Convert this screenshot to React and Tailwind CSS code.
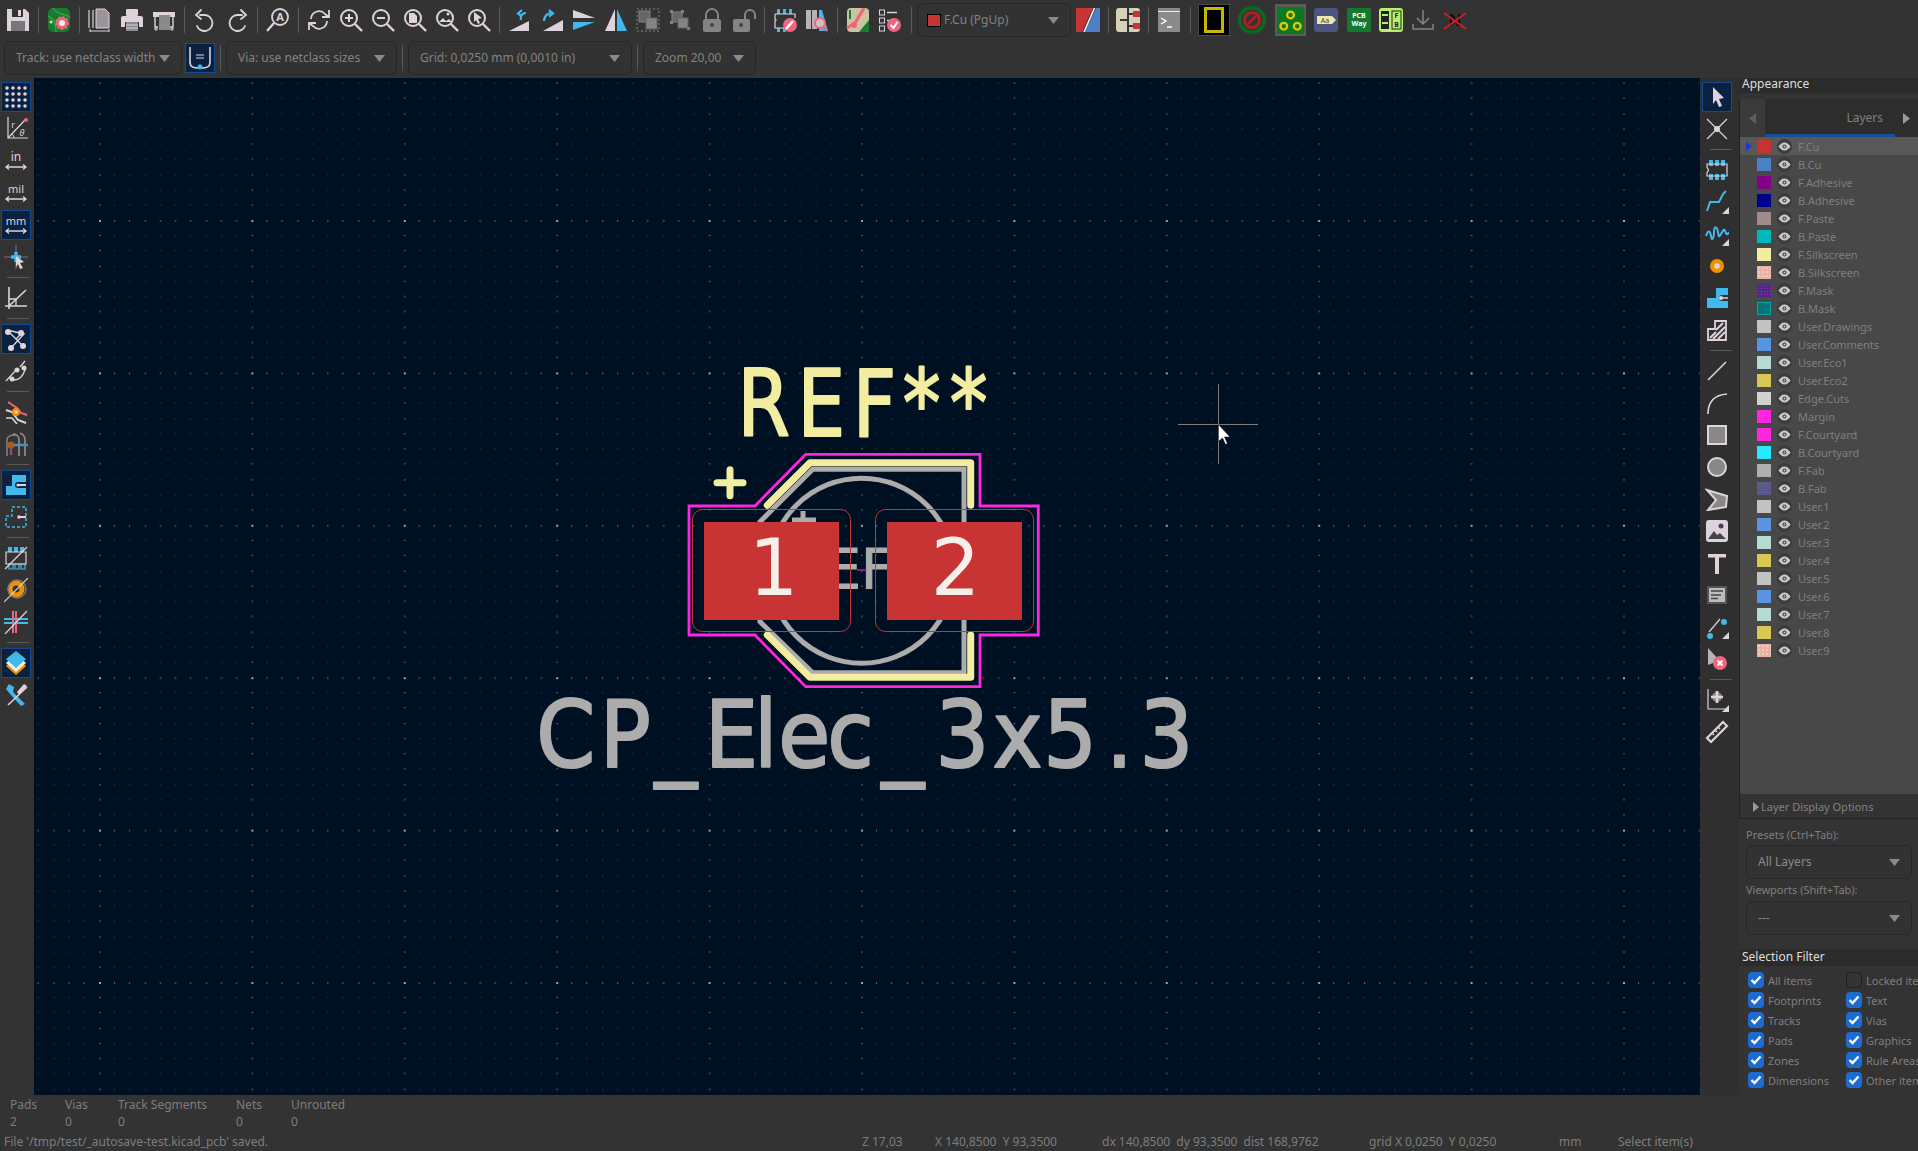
import React from 'react';

const L = '#ded3dd', B = '#42b8eb', P = '#f2647e', O = '#f29100', G = '#848484', D = '#333333';
const S = ({ children, s = 24 }) => (
  <svg viewBox="0 0 24 24" width={s} height={s} fill="none" stroke="none">{children}</svg>
);
const T = (p) => <text fontFamily="'Noto Sans',sans-serif" textAnchor="middle" {...p} />;

const Mag = ({ children }) => (
  <S>
    <circle cx="10" cy="10" r="8" stroke={L} strokeWidth="2" />
    <path d="M16 16l7 7" stroke={L} strokeWidth="2.4" />
    {children}
  </S>
);
const ic = {
  save: <S><path d="M1 1h18l4 4v18H1z" fill={L} /><rect x="6" y="1" width="11" height="8" fill={D} /><rect x="12" y="2" width="3" height="6" fill={L} /><rect x="5" y="13" width="14" height="10" fill="#777" /></S>,
  pcb: <S><rect x="1" y="0" width="22" height="24" rx="5" fill="#1a7a30" /><path d="M6 0c4 8 12 4 17 10M1 8c6 2 8 8 8 16" stroke="#35a04a" strokeWidth="1.5" /><circle cx="15" cy="15" r="6" fill={P} stroke={P} strokeWidth="2" strokeDasharray="2 2" /><circle cx="15" cy="15" r="3" fill="#f4eeee" /><circle cx="4" cy="14" r="1.5" fill="#e8e090" /></S>,
  page: <S><path d="M5 2v18M1 2v18" stroke={L} strokeWidth="1.2" /><path d="M8 1h9l4 4v15H8z" fill="#9a9499" stroke={L} strokeWidth="1" /><path d="M2 23h19M2 21v4M21 21v4" stroke={L} strokeWidth="1" /></S>,
  print: <S><rect x="6" y="1" width="12" height="7" rx="1" fill={L} /><path d="M3 8h18a2 2 0 012 2v9h-4v-5H5v5H1v-9a2 2 0 012-2z" fill={L} /><rect x="6" y="14" width="12" height="9" fill="#8a8a8a" /><path d="M6 17h12M6 20h12" stroke={L} strokeWidth="1" /></S>,
  plot: <S><path d="M1 4h22v5H1z" fill={L} /><path d="M3 9v10h3M21 9v10h-3" stroke={L} strokeWidth="1.4" /><rect x="7" y="7" width="11" height="15" fill="#8a8a8a" /><path d="M2 21h4M18 21h4M4 19v4M20 19v4" stroke={L} strokeWidth="1" /></S>,
  undo: <S><path d="M7 7h5a8 8 0 11-8 11" stroke={L} strokeWidth="1.8" strokeLinecap="round" /><path d="M8 2L3 7l5 4" stroke={L} strokeWidth="1.8" strokeLinecap="round" /></S>,
  redo: <S><path d="M17 7h-5a8 8 0 108 11" stroke={L} strokeWidth="1.8" strokeLinecap="round" /><path d="M16 2l5 5-5 4" stroke={L} strokeWidth="1.8" strokeLinecap="round" /></S>,
  find: <S><circle cx="14" cy="9" r="8" stroke={L} strokeWidth="1.8" /><path d="M8 15l-7 8" stroke={L} strokeWidth="2.2" /><T x="14" y="13" fontSize="11" fontWeight="700" fill={L}>A</T></S>,
  refresh: <S><path d="M4 11a8 8 0 0114-5l4 3M20 13a8 8 0 01-14 5l-4-3" stroke={L} strokeWidth="1.8" /><path d="M22 2v7h-7M2 22v-7h7" stroke={L} strokeWidth="1.8" /></S>,
  zin: <Mag><path d="M10 6v8M6 10h8" stroke={L} strokeWidth="2" /></Mag>,
  zout: <Mag><path d="M6 10h8" stroke={L} strokeWidth="2" /></Mag>,
  zfit: <Mag><path d="M6 5h5l3 3v7H6z" fill={L} /></Mag>,
  zobj: <Mag><path d="M4 14l4-4 3 3 3-2 3 3z" fill={L} /><circle cx="13" cy="6" r="1.5" fill={L} /></Mag>,
  zsel: <Mag><path d="M7 4l8 6-4 1 2 4-2 1-2-4-2 2z" fill={L} /></Mag>,
  rotL: <S><path d="M1 23l20-10v10z" fill={L} /><path d="M13 12c-1-4 1-7 5-7M14 2l-4 3.500 4 3" stroke={B} strokeWidth="2.200" /></S>,
  rotR: <S><path d="M23 23H3l20-11z" fill={L} /><path d="M4 13c0-4 3-8 7-8M9 2l4 3.500-4 3" stroke={B} strokeWidth="2.200" /></S>,
  flipV: <S><path d="M1 2l22 8H1z" fill={L} /><path d="M1 22l22-8H1z" fill={B} /></S>,
  flipH: <S><path d="M11 1L1 23h10z" fill={L} /><path d="M13 1l10 22H13z" fill={B} /></S>,
  group: <S><rect x="1" y="1" width="22" height="22" stroke={G} strokeDasharray="2 2" /><rect x="3" y="3" width="11" height="11" fill="#666" stroke={G} /><rect x="10" y="10" width="11" height="11" fill={G} stroke="#666" /></S>,
  ungroup: <S><path d="M2 2h3v3H2zM13 2h3v3h-3zM2 13h3v3H2zM19 19h3v3h-3z" fill={G} /><rect x="4" y="4" width="10" height="10" fill="#666" stroke={G} /><rect x="10" y="10" width="10" height="10" fill={G} stroke="#666" /></S>,
  lock: <S><path d="M6 11V7a6 6 0 0112 0v4" stroke={G} strokeWidth="2" /><rect x="3" y="11" width="18" height="13" rx="2" fill={G} /><circle cx="12" cy="17" r="2" fill="#444" /></S>,
  unlock: <S><path d="M13 11V7a5 5 0 0110 0v4" stroke={G} strokeWidth="2" /><rect x="1" y="11" width="17" height="13" rx="2" fill={G} /><circle cx="9" cy="17" r="2" fill="#444" /></S>,
  fpBrowse: <S><path d="M4 1h3v5H4zM10 1h3v5h-3zM16 1h3v5h-3z" fill={B} /><path d="M4 20h3v4H4zM10 20h3v4h-3z" fill={B} /><path d="M2 6h20v4M2 6v5l1 1-1 1v7h10" stroke={L} strokeWidth="1.200" /><circle cx="17" cy="17" r="7" fill={P} /><path d="M13 21l7-8" stroke="#fff" strokeWidth="2.500" /></S>,
  lib: <S><rect x="1" y="2" width="5" height="19" fill="#b9b1b8" /><rect x="7" y="2" width="5" height="19" fill="#b9b1b8" /><path d="M14 2h3l6 21h-9z" fill={B} /><circle cx="15" cy="15" r="5" stroke={P} strokeWidth="2" fill="#c9c1c8" /><path d="M18 18l4 5" stroke={P} strokeWidth="2.500" /></S>,
  brd: <S><rect x="1" y="0" width="22" height="24" rx="4" fill="#c9c3a0" /><path d="M13 24L23 12v12z" fill="#1a7a30" /><path d="M1 20c5-4 9-4 11-10l6-10" stroke={P} strokeWidth="3" /><circle cx="8" cy="17" r="3" fill={P} /><path d="M4 2v9" stroke="#1a7a30" strokeWidth="2" /></S>,
  drc: <S><rect x="1.500" y="2" width="5" height="5" stroke={L} /><path d="M9 4.500h10" stroke={L} strokeWidth="1.500" /><rect x="1.500" y="10" width="5" height="5" stroke={L} /><path d="M9 12.500h3" stroke={L} strokeWidth="1.500" /><rect x="1.500" y="18" width="5" height="5" stroke={L} /><circle cx="16" cy="17" r="7" fill={P} /><path d="M12.500 17l3 3 4-6" stroke="#fff" strokeWidth="2" /></S>,
  pair: <S><path d="M0 0h17L6 24H0z" fill="#c83434" /><path d="M24 0v24H9L20 0z" fill="#4d7fc4" /><path d="M18.500 0L8 24" stroke="#fff" strokeWidth="1.500" /></S>,
  net: <S><rect x="0" y="0" width="24" height="24" rx="3" fill="#d8cfb8" /><path d="M12 0v24M12 6h8M12 18h8M4 12h8" stroke="#333" strokeWidth="2" /><path d="M17 3h7v6h-7zM17 15h7v6h-7z" fill="#c83434" /></S>,
  con: <S><rect x="1" y="0" width="22" height="24" fill="#8a8a8a" /><path d="M1 3.500h22" stroke="#eee" strokeWidth="1" /><path d="M4 10l5 3-5 3M10 19h5" stroke="#fff" strokeWidth="1.300" /></S>,
  hide: <div className="w-[32px] h-[32px] bg-black border border-[#4a4a4a] flex items-center justify-center"><div className="w-[20px] h-[26px] border-[3px] border-[#c8b800]" /></div>,
  noHole: <S s={28}><circle cx="12" cy="12" r="10.500" stroke="#0a6a1f" strokeWidth="3" /><circle cx="12" cy="12" r="6.500" stroke="#b02020" strokeWidth="2.500" /><path d="M8 16l8-8" stroke="#b02020" strokeWidth="2" /></S>,
  rings: <S s={27}><rect x="0" y="0" width="24" height="24" fill="#0a7a1f" /><circle cx="12" cy="7" r="3" stroke="#e8c800" strokeWidth="2" /><circle cx="6" cy="17" r="3" stroke="#e8c800" strokeWidth="2" /><circle cx="18" cy="17" r="3" stroke="#e8c800" strokeWidth="2" /></S>,
  tag: <S><rect x="0" y="0" width="24" height="24" rx="3" fill="#4c5480" /><path d="M3 8h15l4 4-4 4H3z" fill="#efe8a8" /><T x="11" y="15" fontSize="7" fill="#444">Aa</T></S>,
  way: <S><rect x="0" y="0" width="24" height="24" rx="2" fill="#16782f" /><T x="12" y="10" fontSize="7" fontWeight="700" fill="#fff">PCB</T><T x="12" y="18" fontSize="7" fontWeight="700" fill="#fff">Way</T></S>,
  fb: <S><rect x="0" y="0" width="24" height="24" rx="3" fill="#b8f070" /><rect x="2" y="3" width="8" height="18" fill="#222" /><rect x="13" y="3" width="9" height="18" fill="#b8f070" stroke="#222" /><T x="17.500" y="10" fontSize="7" fontWeight="700" fill="#222">F</T><T x="17.500" y="19" fontSize="7" fontWeight="700" fill="#222">B</T><path d="M3 7h6M3 15h6" stroke="#b8f070" strokeWidth="2" /></S>,
  down: <S><path d="M12 2v14M6 10l6 6 6-6" stroke={G} strokeWidth="1.500" /><path d="M2 16v5h20v-5" stroke={G} strokeWidth="1.500" /></S>,
  noNet: <S><T x="12" y="18" fontSize="16" fontWeight="700" fill="#111">N</T><path d="M1 21L23 5M1 5l22 16" stroke="#d02020" strokeWidth="1.800" /></S>,
  trk: <S><path d="M2 1v15c0 5 3 6 10 6s10-1 10-6V1" stroke={L} strokeWidth="1.600" /><path d="M8 9h8M8 12h8" stroke={L} /><circle cx="12" cy="21" r="2.500" fill={B} /></S>,
  dots: <S>{[3, 9, 15, 21].flatMap((y) => [3, 9, 15, 21].map((x) => <circle key={x + '-' + y} cx={x} cy={y} r="1.800" fill={L} />))}</S>,
  polar: <S><path d="M4 0v21h21" stroke={L} strokeWidth="1.200" /><path d="M4 21L21 3" stroke={L} strokeWidth="1.200" /><circle cx="22" cy="3" r="2" fill={P} /><T x="9" y="11" fontSize="9" fill={L}>r</T><T x="18" y="19" fontSize="9" fill={L} fontStyle="italic">θ</T><path d="M10 21a5 5 0 00-2-4" stroke={L} /></S>,
  inch: <S><T x="12" y="12" fontSize="12" fill={L}>in</T><path d="M2 18h20M5 15.500L2 18l3 2.500M19 15.500l3 2.500-3 2.500" stroke={L} strokeWidth="1.300" /></S>,
  mil: <S><T x="12" y="12" fontSize="11" fill={L}>mil</T><path d="M2 18h20M5 15.500L2 18l3 2.500M19 15.500l3 2.500-3 2.500" stroke={L} strokeWidth="1.300" /></S>,
  mm: <S><T x="12" y="12" fontSize="11" fill={L}>mm</T><path d="M2 18h20M5 15.500L2 18l3 2.500M19 15.500l3 2.500-3 2.500" stroke={L} strokeWidth="1.300" /></S>,
  cur: <S><path d="M12 0v24M0 12h24" stroke="#888" strokeWidth="0.800" /><path d="M12 7v10M7 12h10" stroke={B} strokeWidth="3.500" /><path d="M12 11l8 6-4 1 3 5-3 1-2-5-2 3z" fill={L} /></S>,
  angle: <S><path d="M5 1v22M1 20h22M5 20L22 4" stroke={L} strokeWidth="1.600" /><path d="M5 13h7v7" stroke={L} strokeWidth="1.300" /></S>,
  rats: <S><path d="M3 3l17 4-14 15M6 6l14 14M18 6l-6 6" stroke={L} strokeWidth="1.400" /><circle cx="4" cy="5" r="3" fill={L} /><circle cx="17" cy="6" r="3" fill={L} /><circle cx="7" cy="21" r="3" fill={L} /><circle cx="19" cy="19" r="3" fill={L} /></S>,
  rats2: <S><path d="M2 22L13 10" stroke={L} strokeWidth="1.300" /><path d="M16 8l5-6" stroke={L} strokeWidth="1.300" /><path d="M10 21c6 0 9-4 11-10" stroke={L} strokeWidth="1.300" /><circle cx="8" cy="20" r="2.500" fill={L} /><circle cx="20" cy="9" r="2.500" fill={L} /><circle cx="13" cy="11" r="2.500" fill={L} /></S>,
  high: <S><path d="M2 10l6 2 6 8 8 3" stroke={L} strokeWidth="2" /><path d="M4 2l9 6 4 5 6 2" stroke={P} strokeWidth="2" /><path d="M2 18l6 0 5 6" stroke={L} strokeWidth="1.600" /><circle cx="12" cy="12" r="4" fill={O} /><circle cx="12" cy="12" r="1.700" fill={L} /></S>,
  fill: <S><path d="M3 24V8c0-4 3-5 9-5" stroke="#888" strokeWidth="1.400" /><path d="M15 24V8c0-4-3-6-6-6M21 24V8c0-3-2-6-5-7" stroke="#888" strokeWidth="1.800" /><path d="M6 13h18" stroke="#4a93b0" strokeWidth="2.500" /><circle cx="7" cy="13" r="3.500" fill="#b05a20" /><path d="M7 15v8" stroke="#8a4a80" strokeWidth="2.500" /></S>,
  pad: <S><path d="M2 13h6V2h14v20H2z" fill={B} /><path d="M22 9h-8a3 3 0 000 6h8z" fill="#0a2240" /><circle cx="14" cy="12" r="1.600" fill={L} /><path d="M15 12h7" stroke={L} strokeWidth="2" /></S>,
  pad2: <S><path d="M2 11h6V2h14v20H2z" stroke={B} strokeDasharray="3 2" strokeWidth="1.500" /><circle cx="15" cy="12" r="1.800" fill={L} /><path d="M15 12h7" stroke={L} strokeWidth="2" /></S>,
  fpOff: <S><path d="M4 1h4v5H4zM10 1h4v5h-4zM16 1h4v5h-4z" fill={B} /><path d="M5 18h4v5H5zM11 18h4v5h-4zM17 18h4v5h-4z" stroke={B} strokeWidth="1.200" /><path d="M2 6h20v12H2z" stroke={L} strokeWidth="1.200" /><path d="M1 23L23 1" stroke={L} strokeWidth="1.200" /></S>,
  holeOff: <S><circle cx="12" cy="11" r="6" stroke={O} strokeWidth="5" /><circle cx="13" cy="11" r="9" stroke="#777" strokeWidth="1.400" /><path d="M0 24L24 0" stroke={L} strokeWidth="1.200" /></S>,
  padsOff: <S><path d="M0 13h24M0 9h24" stroke={B} strokeWidth="2" /><path d="M12 1v22M9 1v22" stroke={P} strokeWidth="2" /><path d="M1 24L23 1" stroke={L} strokeWidth="1.200" /></S>,
  layers: <S><path d="M12 6l10 9-10 9-10-9z" fill={O} /><path d="M12 3l10 9-10 9-10-9z" fill="#f2eee0" /><path d="M12 0l10 8-10 9L2 8z" fill={B} /></S>,
  tools: <S><path d="M2 6l5 6 10 11 4-2-12-12 1-5-5-3z" fill={B} /><path d="M23 4L4 22" stroke={L} strokeWidth="1.500" /><path d="M23 3l-3-2-7 8 2 3z" fill={L} /></S>,
  arrow: <S><path d="M8 2l11 11-5 1 3 7-3 1-3-7-3 4z" fill={L} /></S>,
  cross: <S><path d="M2 2l20 20M22 2L2 22" stroke={L} strokeWidth="1.200" /><circle cx="12" cy="12" r="3" fill={L} /></S>,
  fp: <S><path d="M4 2h4v6H4zM10 2h4v6h-4zM16 2h4v6h-4zM4 16h4v6H4zM10 16h4v6h-4zM16 16h4v6h-4z" fill={B} /><path d="M2 6h20v12H2v-3l1.500-3L2 9z" stroke={L} strokeWidth="1.200" /></S>,
  route: <S><path d="M2 21l3-9h9l4-8 3-3" stroke={B} strokeWidth="2" /><path d="M24 17v7h-7z" fill={L} /></S>,
  tune: <S><path d="M1 14c2-6 4-6 5 0s3 2 3-4 3-6 4 0 1 5 3 2 3-6 4-3 2 5 4 1" stroke={B} strokeWidth="2" /><path d="M24 17v7h-7z" fill={L} /></S>,
  via: <S><circle cx="12" cy="12" r="7" fill={O} /><circle cx="12" cy="12" r="2.800" fill={L} /></S>,
  padB: <S><path d="M2 12h9V2h12v20H2z" fill={B} /><path d="M23 9h-6a3 3 0 000 6h6z" fill={D} /><circle cx="16" cy="12" r="2" fill={L} /><path d="M16 12h7" stroke={L} strokeWidth="1.500" /></S>,
  zone: <S><path d="M3 22V11h7V3h11v19z" fill="#333" stroke={L} strokeWidth="1.800" /><path d="M5 20l6-6M8 21l12-12M13 21l7-7M11 12l7-7" stroke={L} strokeWidth="2" /></S>,
  line: <S><path d="M3 21L21 3" stroke={L} strokeWidth="1.600" /></S>,
  arc: <S><path d="M3 23C3 11 9 4 22 3" stroke={L} strokeWidth="1.600" /></S>,
  rect: <S><rect x="3" y="3" width="18" height="18" fill="#888" stroke={L} strokeWidth="2" /></S>,
  circ: <S><circle cx="12" cy="12" r="9" fill="#888" stroke={L} strokeWidth="2" /></S>,
  poly: <S><path d="M2 3l20 6-1 11-18 3 8-10z" fill="#888" stroke={L} strokeWidth="2" /></S>,
  img: <S><rect x="1" y="1" width="22" height="22" rx="3" fill={L} /><path d="M3 20l6-8 3 4 3-2 6 6z" fill="#444" /><circle cx="16" cy="7" r="2.500" fill="#444" /></S>,
  txt: <S><path d="M3 3h18v3.500h-7V23h-4V6.500H3z" fill={L} /></S>,
  box: <S><rect x="2" y="3" width="20" height="18" fill="#555" /><rect x="4" y="5" width="16" height="14" fill="#bbb" /><path d="M6 8h12M6 12h10M6 15.500h7" stroke="#444" strokeWidth="1.300" /></S>,
  dim: <S><path d="M4 17L15 4" stroke={L} strokeWidth="1.200" /><circle cx="19" cy="7" r="3" fill={B} /><circle cx="5" cy="21" r="3" fill={B} /><path d="M24 17v7h-7z" fill={L} /></S>,
  del: <S><path d="M3 1l12 13-7 2-5 2z" fill="#b9b1b8" /><circle cx="15" cy="16" r="7" fill={P} /><path d="M12.500 13.500l5 5M17.500 13.500l-5 5" stroke="#fff" strokeWidth="2" /></S>,
  origin: <S><path d="M3 1v20h18" stroke={L} strokeWidth="1.200" /><circle cx="12" cy="9" r="5" fill="#888" /><path d="M12 3v12M6 9h12" stroke={L} strokeWidth="2.500" /><path d="M24 17v7h-7z" fill={L} /></S>,
  ruler: <S><path d="M2 18L18 2l4 4L6 22z" stroke={L} strokeWidth="2.200" /><path d="M7 13l2 2M10 10l2 2M13 7l2 2" stroke={L} strokeWidth="1.500" /></S>,
};

const Btn = ({ i, w = 'w-[32px]' }) => <div className={`${w} h-[32px] shrink-0 flex items-center justify-center`}>{ic[i]}</div>;
const VSep = ({ w = 'w-[9px]' }) => <div className={`${w} h-[32px] shrink-0 flex items-center justify-center`}><div className="w-px h-[26px] bg-[#5a5a5a]" /></div>;
const Combo = ({ w, children }) => (
  <div className={`${w} h-[34px] shrink-0 rounded-[6px] border border-[#262626] bg-[#323232] flex items-center justify-between pl-[11px] pr-[11px] text-[12px] text-[#828282]`}>
    <span className="flex items-center gap-[2px] whitespace-nowrap">{children}</span>
    <svg width="11" height="7" viewBox="0 0 11 7" className="shrink-0"><path d="M0 0h11L5.500 7z" fill="#8a8a8a" /></svg>
  </div>
);

const Tool = ({ i, on }) => (
  <div className={`w-[30px] h-[30px] my-px shrink-0 flex items-center justify-center ${on ? 'bg-[#0a2240] border border-[#134a91]' : ''}`}>{ic[i]}</div>
);
const HSep = () => <div className="h-[9px] shrink-0 flex items-center justify-center"><div className="h-px w-[22px] bg-[#5a5a5a]" /></div>;

const layers = [
  ['F.Cu', 'bg-[#c83434]'], ['B.Cu', 'bg-[#4d7fc4]'], ['F.Adhesive', 'bg-[#84008a]'], ['B.Adhesive', 'bg-[#00008a]'],
  ['F.Paste', 'bg-[#9a8f8c] bg-[radial-gradient(#c07a7a_1px,transparent_1px)] bg-[size:3px_3px]'],
  ['B.Paste', 'bg-[#00b8b8]'], ['F.Silkscreen', 'bg-[#f2eda1]'],
  ['B.Silkscreen', 'bg-[#e8b2a7] bg-[radial-gradient(#f2c9c0_1px,transparent_1px)] bg-[size:4px_4px]'],
  ['F.Mask', 'bg-[#4c2a86] bg-[radial-gradient(#a02aa8_1px,transparent_1px)] bg-[size:3px_3px]'],
  ['B.Mask', 'bg-[#02757a] border border-[#02a8a8]'],
  ['User.Drawings', 'bg-[#c2c2c2]'], ['User.Comments', 'bg-[#5994e3]'], ['User.Eco1', 'bg-[#b4dbd2]'], ['User.Eco2', 'bg-[#d8c852]'], ['Edge.Cuts', 'bg-[#d0d2cd]'],
  ['Margin', 'bg-[#ff26e2]'], ['F.Courtyard', 'bg-[#ff26e2]'], ['B.Courtyard', 'bg-[#26e9ff]'], ['F.Fab', 'bg-[#afafaf]'],
  ['B.Fab', 'bg-[#58588a] bg-[radial-gradient(#6a6aa0_1px,transparent_1px)] bg-[size:3px_3px]'],
  ['User.1', 'bg-[#c2c2c2]'], ['User.2', 'bg-[#5994e3]'], ['User.3', 'bg-[#b4dbd2]'], ['User.4', 'bg-[#d8c852]'], ['User.5', 'bg-[#c2c2c2]'],
  ['User.6', 'bg-[#5994e3]'], ['User.7', 'bg-[#b4dbd2]'], ['User.8', 'bg-[#d8c852]'],
  ['User.9', 'bg-[#e8b2a7] bg-[radial-gradient(#f2c9c0_1px,transparent_1px)] bg-[size:4px_4px]'],
];

const Eye = () => (
  <div className="w-[15px] h-[15px] rounded-full bg-[#3c3c3c] flex items-center justify-center">
    <svg width="13" height="9" viewBox="0 0 13 9"><path d="M.5 4.500C3 1 5 .5 6.500.5S10 1 12.500 4.500C10 8 8 8.500 6.500 8.500S3 8 .5 4.500z" fill="#c9c9c9" /><circle cx="6.500" cy="4.500" r="2" fill="#3c3c3c" /><circle cx="6.500" cy="4.500" r="1" fill="#c9c9c9" /></svg>
  </div>
);

const Check = ({ off, label }) => (
  <div className="h-[20px] flex items-center gap-[4px] whitespace-nowrap">
    {off ? <div className="w-[16px] h-[16px] rounded-[4px] border border-[#1e1e1e] bg-[#333]" /> : (
      <div className="w-[16px] h-[16px] rounded-[4px] bg-[#1d6ad0] flex items-center justify-center">
        <svg width="12" height="10" viewBox="0 0 12 10"><path d="M1.500 5l3 3 6-6.500" stroke="#fff" strokeWidth="2.400" fill="none" /></svg>
      </div>
    )}
    <span className="text-[11px] text-[#7f7f7f] leading-none">{label}</span>
  </div>
);

const grid = [];
for (let j = 0; j < 10; j++) for (let i = 0; i < 10; i++) {
  const maj = i === 0 && j === 0, col = i === 0, row = j === 0;
  grid.push(
    <rect key={i + '_' + j} x={Math.round(i * 15.24)} y={Math.round(j * 15.24)}
      width={col ? 2 : 1} height={row ? 2 : 1}
      fill={maj ? '#9fa3a3' : col || row ? '#5f656b' : '#3e4a58'} />
  );
}

const F = "'DejaVu Sans',sans-serif";
/* glyph origins: wanted left edge of the ink minus the side bearing, in the scaled space */
const place = (pairs, size, sx) => pairs.map(([x, lsb]) => ((x - lsb * size * sx) / sx).toFixed(1)).join(' ');
const refX = place([[745, 0.098], [805, 0.098], [860, 0.098], [905, 0.03], [952, 0.03]], 92, 0.82);
const cpX = place([[541, 0.056], [608, 0.098], [654, -0.01], [713, 0.098], [762, 0.094], [783, 0.055], [832, 0.055], [881, -0.01], [942, 0.076], [995, 0.03], [1050, 0.08], [1116, 0.117], [1146, 0.076]], 92, 0.92);

const Canvas = () => (
  <svg width="1666" height="1017" viewBox="34 78 1666 1017" className="block shrink-0">
    <defs>
      <pattern id="g" x="99" y="220" width="152.4" height="152.4" patternUnits="userSpaceOnUse">{grid}</pattern>
    </defs>
    <rect x="34" y="78" width="1666" height="1017" fill="#001023" />
    <rect x="34" y="78" width="1666" height="1017" fill="url(#g)" />
    <g fill="none" stroke="#acacac" strokeWidth="5">
      <path d="M812.700 469.300H964V672.700H812.700L760 621.700V521.700z" />
      <circle cx="861.700" cy="570.700" r="92.500" />
      <path d="M803 511v17M792 520h24" />
    </g>
    <text x="788" y="588" fontFamily={F} fontSize="55" fill="#acacac" stroke="#acacac" strokeWidth="1">REF**</text>
    <path d="M857 570h10" stroke="#ff26e2" />
    <g fill="none" stroke="#f2eda1" strokeWidth="7" strokeLinecap="round" strokeLinejoin="round">
      <path d="M767.300 505.300L810 462.700H970.700V505.300" />
      <path d="M767.300 635L810 677.300H970.700V635" />
      <path d="M717 482.700h26M730 469.700v26" />
    </g>
    <g transform="scale(0.82 1)">
      <text x={refX} y="436" fontFamily={F} fontSize="92" fill="#f2eda1" stroke="#f2eda1" strokeWidth="2.200" strokeLinejoin="round">REF**</text>
    </g>
    <g transform="scale(0.92 1)">
      <text x={cpX} y="767" fontFamily={F} fontSize="92" fill="#acacac" stroke="#acacac" strokeWidth="2.200" strokeLinejoin="round">CP_Elec_3x5.3</text>
    </g>
    <path d="M805.700 454.300H980V506H1038.300V635H980V686.700H805.700L755 635H689V506H755z" fill="none" stroke="#ff26e2" strokeWidth="2.800" />
    <rect x="704" y="522" width="135" height="98" fill="#c83434" />
    <rect x="887" y="522" width="135" height="98" fill="#c83434" />
    <rect x="692.500" y="509.500" width="158" height="122" rx="10" fill="none" stroke="#c83434" />
    <rect x="875.500" y="509.500" width="158" height="122" rx="10" fill="none" stroke="#c83434" />
    <text x="773.500" y="595" fontFamily={F} fontSize="78" textAnchor="middle" fill="#f6efea">1</text>
    <text x="955.500" y="595" fontFamily={F} fontSize="78" textAnchor="middle" fill="#f6efea">2</text>
    <path d="M1178 424.500h80M1218.500 384v80" stroke="#7d7d7d" />
    <path d="M1218.500 424.500v17l4-3.500 3 6.500 2-1-3-6.500h5.500z" fill="#fff" stroke="#000" strokeWidth="0.500" />
  </svg>
);

const Stat = ({ w, a, b }) => (
  <div className={`${w} shrink-0 flex flex-col`}>
    <span className="h-[17px] leading-[17px]">{a}</span>
    <span className="h-[17px] leading-[17px]">{b}</span>
  </div>
);

export default function App() {
  return (
    <div className="w-[1918px] h-[1151px] overflow-hidden flex flex-col bg-[#333333] font-['Noto_Sans',sans-serif] text-[#828282]">
      <div className="h-[39px] shrink-0 flex items-center pl-[2px] pt-px">
        <Btn i="save" /><VSep /><Btn i="pcb" /><VSep /><Btn i="page" /><Btn i="print" /><Btn i="plot" /><VSep />
        <Btn i="undo" /><Btn i="redo" /><VSep /><Btn i="find" /><VSep />
        <Btn i="refresh" /><Btn i="zin" /><Btn i="zout" /><Btn i="zfit" /><Btn i="zobj" /><Btn i="zsel" /><VSep />
        <Btn i="rotL" /><Btn i="rotR" /><Btn i="flipV" /><Btn i="flipH" /><Btn i="group" /><Btn i="ungroup" /><Btn i="lock" /><Btn i="unlock" /><VSep />
        <Btn i="fpBrowse" /><Btn i="lib" /><VSep /><Btn i="brd" /><Btn i="drc" /><VSep w="w-[11px]" />
        <Combo w="w-[154px]">
          <span className="w-[14px] h-[13px] ml-[-2px] mr-px bg-[#c83434] border border-black" />F.Cu (PgUp)
        </Combo>
        <div className="w-[1px]" /><Btn i="pair" /><VSep w="w-[8px]" /><Btn i="net" /><VSep w="w-[9px]" /><Btn i="con" /><VSep w="w-[10px]" />
        <Btn i="hide" w="w-[38px]" /><Btn i="noHole" w="w-[38px]" />
        <div className="w-[38px] h-[32px] shrink-0 flex items-center justify-center">
          <div className="w-[31px] h-[32px] flex items-center justify-center bg-[#5a5a5a]">{ic.rings}</div>
        </div>
        <Btn i="tag" w="w-[34px]" /><Btn i="way" /><Btn i="fb" /><Btn i="down" /><Btn i="noNet" />
      </div>
      <div className="h-[39px] shrink-0 flex items-center pl-[4px] pb-px">
        <Combo w="w-[178px]">Track: use netclass width</Combo>
        <div className="w-[3px]" />
        <div className="w-[30px] h-[30px] shrink-0 flex items-center justify-center bg-[#0a2240] border border-[#134a91]">{ic.trk}</div>
        <VSep w="w-[11px]" />
        <Combo w="w-[171px]">Via: use netclass sizes</Combo>
        <VSep w="w-[11px]" />
        <Combo w="w-[224px]">Grid: 0,0250 mm (0,0010 in)</Combo>
        <VSep w="w-[11px]" />
        <Combo w="w-[113px]">Zoom 20,00</Combo>
      </div>
      <div className="h-[1017px] shrink-0 flex">
        <div className="w-[34px] shrink-0 flex flex-col pl-px pt-[3px]">
          <Tool i="dots" on /><Tool i="polar" /><Tool i="inch" /><Tool i="mil" /><Tool i="mm" on /><Tool i="cur" /><HSep />
          <Tool i="angle" /><HSep /><Tool i="rats" on /><Tool i="rats2" /><HSep />
          <Tool i="high" /><Tool i="fill" /><HSep /><Tool i="pad" on /><Tool i="pad2" /><HSep />
          <Tool i="fpOff" /><Tool i="holeOff" /><Tool i="padsOff" /><HSep /><Tool i="layers" on /><Tool i="tools" />
        </div>
        <Canvas />
        <div className="w-[39px] shrink-0 flex flex-col pl-[2px] pt-[3px] bg-[#2f2f2f]">
          <Tool i="arrow" on /><Tool i="cross" /><HSep />
          <Tool i="fp" /><Tool i="route" /><Tool i="tune" /><Tool i="via" /><Tool i="padB" /><Tool i="zone" /><HSep />
          <Tool i="line" /><Tool i="arc" /><Tool i="rect" /><Tool i="circ" /><Tool i="poly" /><Tool i="img" /><Tool i="txt" /><Tool i="box" /><Tool i="dim" /><Tool i="del" /><HSep />
          <Tool i="origin" /><Tool i="ruler" />
        </div>
        <div className="w-[179px] shrink-0 flex flex-col overflow-hidden">
          <div className="h-[17px] shrink-0 mt-[-2px] bg-[#2b2b2b] pl-[3px] text-[12px] leading-[16px] text-[#dedede]">Appearance</div>
          <div className="h-[6px] shrink-0" />
          <div className="h-[720px] shrink-0 flex flex-col border-l border-b border-[#222]">
            <div className="h-[38px] shrink-0 flex bg-[#2d2d2d]">
              <div className="w-[25px] shrink-0 flex items-center justify-center bg-[#3a3a3a]">
                <svg width="7" height="11" viewBox="0 0 7 11"><path d="M7 0v11L0 5.500z" fill="#5e5e5e" /></svg>
              </div>
              <div className="w-[130px] shrink-0 flex flex-col border-b-[3px] border-[#154f9c]">
                <div className="flex-1 flex items-center justify-end pr-[12px] pt-[2px] text-[12px] text-[#7f7f7f]">Layers</div>
              </div>
              <div className="flex-1 flex items-center justify-center">
                <svg width="7" height="11" viewBox="0 0 7 11"><path d="M0 0v11l7-5.500z" fill="#9a9a9a" /></svg>
              </div>
            </div>
            <div className="flex-1 flex flex-col bg-[#484848]">
              {layers.map(([n, c], i) => (
                <div key={n} className={`h-[18px] shrink-0 flex items-center ${i === 0 ? 'bg-[#585858]' : ''}`}>
                  <div className="w-[17px] shrink-0 flex justify-center">
                    {i === 0 && <svg width="6" height="9" viewBox="0 0 6 9"><path d="M0 0v9l6-4.500z" fill="#2436d8" /></svg>}
                  </div>
                  <span className={`w-[14px] h-[13px] shrink-0 ${c}`} />
                  <div className="w-[27px] shrink-0 flex justify-center"><Eye /></div>
                  <span className="text-[11px] text-[#7f7f7f] leading-none">{n}</span>
                </div>
              ))}
            </div>
            <div className="h-[24px] shrink-0 flex items-center pl-[13px] pt-[2px] gap-[2px] text-[11px] text-[#828282]">
              <svg width="6" height="10" viewBox="0 0 6 10"><path d="M0 0v10l6-5z" fill="#9a9a9a" /></svg>
              Layer Display Options
            </div>
          </div>
          <div className="flex flex-col pl-[7px] pr-[6px]">
            <div className="h-[26px] flex items-end text-[11px] leading-[14px] text-[#7f7f7f] pb-[3px]">Presets (Ctrl+Tab):</div>
            <Combo w="w-[166px]"><span className="text-[#8a8a8a]">All Layers</span></Combo>
            <div className="h-[22px] flex items-center text-[11px] text-[#7f7f7f]">Viewports (Shift+Tab):</div>
            <Combo w="w-[166px]"><span className="text-[#8a8a8a]">---</span></Combo>
          </div>
          <div className="h-[17px] shrink-0 mt-[14px] bg-[#2b2b2b] pl-[3px] text-[12px] leading-[15px] text-[#dedede]">Selection Filter</div>
          <div className="flex pl-[9px] pt-[4px]">
            <div className="w-[98px] shrink-0 flex flex-col">
              {['All items', 'Footprints', 'Tracks', 'Pads', 'Zones', 'Dimensions'].map((t) => <Check key={t} label={t} />)}
            </div>
            <div className="flex flex-col">
              <Check off label="Locked items" />
              {['Text', 'Vias', 'Graphics', 'Rule Areas', 'Other items'].map((t) => <Check key={t} label={t} />)}
            </div>
          </div>
        </div>
      </div>
      <div className="flex-1 flex flex-col text-[12px] text-[#7d7d7d]">
        <div className="h-[38px] shrink-0 flex pl-[10px] pt-[1px]">
          <Stat w="w-[55px]" a="Pads" b="2" /><Stat w="w-[53px]" a="Vias" b="0" /><Stat w="w-[118px]" a="Track Segments" b="0" /><Stat w="w-[55px]" a="Nets" b="0" /><Stat w="w-[70px]" a="Unrouted" b="0" />
        </div>
        <div className="h-[18px] flex items-center whitespace-pre">
          <span className="w-[862px] shrink-0 pl-[4px]">File '/tmp/test/_autosave-test.kicad_pcb' saved.</span>
          <span className="w-[73px] shrink-0">Z 17,03</span>
          <span className="w-[167px] shrink-0">X 140,8500  Y 93,3500</span>
          <span className="w-[267px] shrink-0">dx 140,8500  dy 93,3500  dist 168,9762</span>
          <span className="w-[190px] shrink-0">grid X 0,0250  Y 0,0250</span>
          <span className="w-[59px] shrink-0">mm</span>
          <span className="shrink-0">Select item(s)</span>
        </div>
      </div>
    </div>
  );
}
